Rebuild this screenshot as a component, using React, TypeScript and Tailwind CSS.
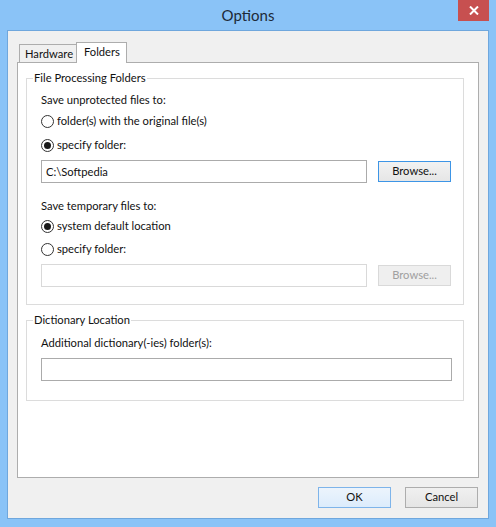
import React from "react";

const font = { fontFamily: 'Lato, "Noto Sans", sans-serif' };

function Radio({ label, checked }: { label: string; checked?: boolean }) {
  return (
    <div className="flex items-center h-[16px]">
      <span className="w-[13px] h-[13px] rounded-full border border-[#333333] bg-white flex items-center justify-center">
        {checked && <span className="w-[7px] h-[7px] rounded-full bg-[#1a1a1a]" />}
      </span>
      <span className="ml-[3px]">{label}</span>
    </div>
  );
}

function Group({ title, className, children }: { title: string; className?: string; children: React.ReactNode }) {
  return (
    <div className={`relative border border-[#dcdcdc] ${className ?? ""}`}>
      <span className="absolute left-[6px] top-[-9px] px-[1px] bg-white leading-[16px]">{title}</span>
      {children}
    </div>
  );
}

export default function App() {
  return (
    <div className="w-[496px] h-[527px] bg-[#8ac3f7] flex flex-col text-[11.2px] text-[#111111]" style={font}>
      {/* title bar */}
      <div className="relative h-[30px] flex items-center justify-center">
        <span className="text-[15px] text-[#1d2a38]">Options</span>
        <div className="absolute right-[7px] top-0 w-[31px] h-[21px] bg-[#c75050] flex items-center justify-center">
          <svg width="10" height="9" viewBox="0 0 10 9">
            <path d="M1 0.5 L9 8.5 M9 0.5 L1 8.5" stroke="white" strokeWidth="2" />
          </svg>
        </div>
      </div>

      {/* client */}
      <div className="mx-[7px] h-[489px] border border-[#6fa7dd] bg-[#f0f0f0] pt-[11px] px-[9px]">
        {/* tabs */}
        <div className="flex items-end h-[20px]">
          <div className="ml-[2px] w-[57px] h-[18px] border-l border-t border-[#adadad] bg-[#f0f0f0] pl-[5px] leading-[17px]">
            Hardware
          </div>
          <div className="relative z-10 w-[51px] h-[21px] mb-[-1px] border-l border-t border-r border-[#adadad] bg-white pl-[7px] leading-[18px]">
            Folders
          </div>
        </div>

        {/* panel */}
        <div className="h-[416px] border border-[#adadad] bg-white flex flex-col">
          <Group title="File Processing Folders" className="mt-[15px] ml-[8px] mr-[14px] pt-[13px] pl-[14px] pb-[17px]">
            <div className="h-[16px] leading-[16px]">Save unprotected files to:</div>
            <div className="mt-[5px]">
              <Radio label="folder(s) with the original file(s)" />
            </div>
            <div className="mt-[8px]">
              <Radio label="specify folder:" checked />
            </div>
            <div className="mt-[7px] flex items-center">
              <div className="w-[326px] h-[23px] border border-[#ababab] bg-white pl-[4px] leading-[21px]">C:\Softpedia</div>
              <div className="ml-[11px] w-[73px] h-[21px] border border-[#3d95e6] bg-gradient-to-b from-[#f2f2f2] to-[#e6e6e6] flex items-center justify-center">
                Browse...
              </div>
            </div>
            <div className="mt-[15px] h-[16px] leading-[16px]">Save temporary files to:</div>
            <div className="mt-[4px]">
              <Radio label="system default location" checked />
            </div>
            <div className="mt-[7px]">
              <Radio label="specify folder:" />
            </div>
            <div className="mt-[7px] flex items-center">
              <div className="w-[326px] h-[23px] border border-[#d9d9d9] bg-white" />
              <div className="ml-[11px] w-[73px] h-[21px] border border-[#d9d9d9] bg-[#efefef] text-[#a0a0a0] flex items-center justify-center">
                Browse...
              </div>
            </div>
          </Group>

          <Group title="Dictionary Location" className="mt-[15px] ml-[8px] mr-[14px] pt-[14px] pl-[14px] pb-[19px]">
            <div className="h-[16px] leading-[16px]">Additional dictionary(-ies) folder(s):</div>
            <div className="mt-[7px] w-[411px] h-[23px] border border-[#ababab] bg-white" />
          </Group>
        </div>

        {/* buttons */}
        <div className="mt-[9px] pr-[1px] flex justify-end gap-[14px]">
          <div className="w-[73px] h-[21px] border border-[#7eb4ea] bg-gradient-to-b from-[#ecf4fc] to-[#dcecfc] flex items-center justify-center">
            OK
          </div>
          <div className="w-[73px] h-[21px] border border-[#adadad] bg-gradient-to-b from-[#f0f0f0] to-[#e5e5e5] flex items-center justify-center">
            Cancel
          </div>
        </div>
      </div>
    </div>
  );
}
